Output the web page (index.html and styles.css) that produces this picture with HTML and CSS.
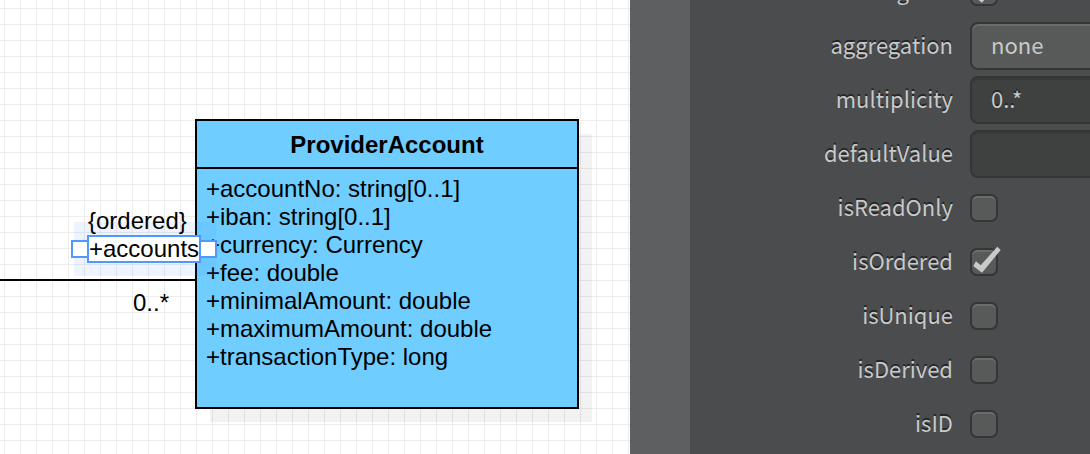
FILE: index.html
```html
<!DOCTYPE html>
<html lang="en">
<head>
<meta charset="utf-8">
<title>Class diagram editor</title>
<link rel="stylesheet" href="styles.css">
</head>
<body>
<div class="app">
  <main class="canvas">
    <section class="uml-class">
      <h1 class="uml-name">ProviderAccount</h1>
      <ul class="uml-attributes">
        <li>+accountNo: string[0..1]</li>
        <li>+iban: string[0..1]</li>
        <li>+currency: Currency</li>
        <li>+fee: double</li>
        <li>+minimalAmount: double</li>
        <li>+maximumAmount: double</li>
        <li>+transactionType: long</li>
      </ul>
    </section>
    <div class="association"></div>
    <div class="selection-area"></div>
    <span class="edge-label constraint">{ordered}</span>
    <span class="edge-label role">+accounts</span>
    <span class="handle handle-start"></span>
    <span class="handle handle-end"></span>
    <span class="edge-label cardinality">0..*</span>
  </main>
  <div class="splitter"></div>
  <aside class="inspector">
    <form class="properties">
      <div class="row"><label for="navigable">navigable</label><span class="check"><input type="checkbox" id="navigable" checked><svg class="tick" viewBox="0 0 32 32" aria-hidden="true"><path d="M27.3.7 30.7 4 12 26.7 3.3 20 6 15.3l4.7 4Z"/></svg></span></div>
      <div class="row"><label for="aggregation">aggregation</label><select id="aggregation" class="field select"><option>none</option><option>shared</option><option>composite</option></select></div>
      <div class="row"><label for="multiplicity">multiplicity</label><input class="field text" type="text" id="multiplicity" value="0..*"></div>
      <div class="row"><label for="defaultValue">defaultValue</label><input class="field text" type="text" id="defaultValue"></div>
      <div class="row"><label for="isReadOnly">isReadOnly</label><span class="check"><input type="checkbox" id="isReadOnly"></span></div>
      <div class="row"><label for="isOrdered">isOrdered</label><span class="check"><input type="checkbox" id="isOrdered" checked><svg class="tick" viewBox="0 0 32 32" aria-hidden="true"><path d="M27.3.7 30.7 4 12 26.7 3.3 20 6 15.3l4.7 4Z"/></svg></span></div>
      <div class="row"><label for="isUnique">isUnique</label><span class="check"><input type="checkbox" id="isUnique"></span></div>
      <div class="row"><label for="isDerived">isDerived</label><span class="check"><input type="checkbox" id="isDerived"></span></div>
      <div class="row"><label for="isID">isID</label><span class="check"><input type="checkbox" id="isID"></span></div>
    </form>
  </aside>
</div>
</body>
</html>
```
FILE: styles.css
```css
* { box-sizing: border-box; }

body {
  margin: 0;
  font-family: "Liberation Sans", Arial, sans-serif;
  font-size: 24px;
  line-height: 28px;
  color: #000;
}

.app {
  display: flex;
  height: 100vh;
  overflow: hidden;
}

/* Diagram canvas */
.canvas {
  position: relative;
  flex: 1;
  overflow: hidden;
  background-color: #fff;
  background-image:
    linear-gradient(to right, #ededed 1px, transparent 1px),
    linear-gradient(to bottom, #ededed 1px, transparent 1px);
  background-size: 16px 16px;
  background-position: 4px 8px;
}

.uml-class {
  position: absolute;
  left: 195px;
  top: 119px;
  width: 384px;
  border: 2px solid #000;
  background: #6fcdff;
  box-shadow: 14px 14px 0 -1px rgba(0, 0, 0, 0.05);
}

.uml-name {
  margin: 0;
  padding: 10px 0 8px;
  border-bottom: 2px solid #000;
  font-size: 24px;
  font-weight: bold;
  line-height: 28px;
  text-align: center;
}

.uml-attributes {
  margin: 0;
  padding: 6px 9px 36px;
  list-style: none;
}

.association {
  position: absolute;
  left: 0;
  top: 279px;
  width: 195px;
  height: 2px;
  background: #000;
}

.selection-area {
  position: absolute;
  left: 74px;
  top: 222px;
  width: 142px;
  height: 54px;
  background: rgba(77, 148, 255, 0.1);
}

.edge-label {
  position: absolute;
  white-space: nowrap;
}

.constraint { left: 88px; top: 207px; }
.cardinality { left: 133px; top: 289px; }

.role {
  left: 87px;
  top: 235px;
  width: 114px;
  height: 28px;
  border: 2px solid #4f98fd;
  background: #fff;
  line-height: 24px;
}

.handle {
  position: absolute;
  top: 240px;
  width: 18px;
  height: 18px;
  border: 2px solid #4f98fd;
  background: #fff;
}

.handle-start { left: 71px; }
.handle-end { left: 199px; }

/* Inspector */
.splitter {
  width: 60px;
  background: #5d5f60;
}

.inspector {
  width: 400px;
  overflow: hidden;
  background: #4b4c4e;
}

.properties {
  margin-top: -35px;
  font-family: "Noto Sans CJK SC", "Noto Sans", sans-serif;
  font-size: 22px;
  color: #c8caca;
  text-shadow: 0 -2px 0 #242526;
}

.row {
  display: grid;
  grid-template-columns: 263px 1fr;
  column-gap: 17px;
  align-items: center;
  height: 54px;
}

.row label {
  padding-bottom: 4px;
  text-align: right;
}

.field {
  width: 130px;
  height: 48px;
  margin: 0;
  padding: 0 19px 4px;
  border: 2px solid #343635;
  border-radius: 8px;
  font: inherit;
  color: inherit;
  text-shadow: inherit;
  appearance: none;
}

.select {
  background: #585a59;
  box-shadow: inset 0 2px 0 #6b6d6c;
  text-shadow: none;
}

.text {
  background: #3f4140;
  box-shadow: inset 0 2px 0 #393b3a;
}

.check {
  position: relative;
  display: flex;
}

.check input {
  width: 28px;
  height: 28px;
  margin: 0;
  border: 2px solid #343635;
  border-radius: 7px;
  background: #585a59;
  box-shadow: inset 0 2px 0 #6b6d6c;
  appearance: none;
}

.tick {
  position: absolute;
  left: 0;
  top: -2px;
  width: 32px;
  height: 32px;
  fill: #c8caca;
  pointer-events: none;
}
```
